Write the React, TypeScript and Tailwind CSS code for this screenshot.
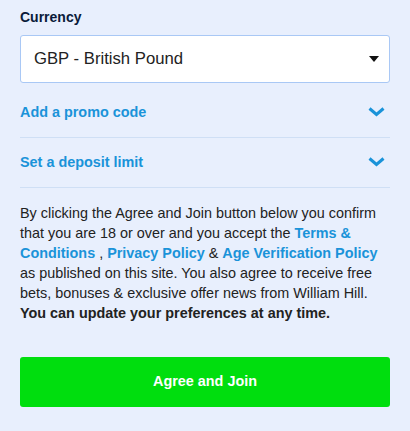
import React from "react";

const Chevron = () => (
  <svg width="17" height="10" viewBox="0 0 17 10" className="mr-[5px] -mt-[2px]">
    <path d="M1.5 1.5 L8.5 7.5 L15.5 1.5" fill="none" stroke="#1a93d9" strokeWidth="3" />
  </svg>
);

const App = () => {
  const rows = [
    { id: 1, title: "Add a promo code" },
    { id: 2, title: "Set a deposit limit" },
  ];

  return (
    <div
      className="w-[410px] h-[431px] bg-[#e8effd] px-5 pt-[9px] text-[#222]"
      style={{ fontFamily: '"Liberation Sans", Arial, sans-serif' }}
    >
      <div className="text-[14px] font-bold text-[#0a1a3a] leading-[17px]">Currency</div>
      <div className="mt-[9px] h-[48px] bg-white border border-[#a9c8f5] rounded-[3px] flex items-center justify-between pl-[13px] pr-[10px]">
        <span className="text-[16.7px] text-[#222]">GBP - British Pound</span>
        <svg width="10" height="6" viewBox="0 0 10 6">
          <path d="M0 0 L10 0 L5 6 Z" fill="#111" />
        </svg>
      </div>
      <div className="mt-[5px] flex flex-col">
        {rows.map((row) => (
          <div
            key={row.id}
            className="h-[50px] flex items-center justify-between border-b border-[#cfdff5]"
          >
            <span className="text-[14.4px] font-bold text-[#1a93d9]">{row.title}</span>
            <Chevron />
          </div>
        ))}
      </div>
      <p className="mt-[15px] text-[14.4px] leading-[20px] text-[#222]">
        By clicking the Agree and Join button below you confirm that you are 18 or over and you accept the{" "}
        <span className="font-bold text-[#1a93d9]">Terms &amp; Conditions</span> ,{" "}
        <span className="font-bold text-[#1a93d9]">Privacy Policy</span> &amp;{" "}
        <span className="font-bold text-[#1a93d9]">Age Verification Policy</span> as published on this site. You also
        agree to receive free bets, bonuses &amp; exclusive offer news from William Hill.{" "}
        <span className="font-bold">You can update your preferences at any time.</span>
      </p>
      <button className="mt-[34px] w-full h-[50px] bg-[#00de0e] rounded-[3px] text-white text-[14.4px] font-bold">
        Agree and Join
      </button>
    </div>
  );
};

export default App;
